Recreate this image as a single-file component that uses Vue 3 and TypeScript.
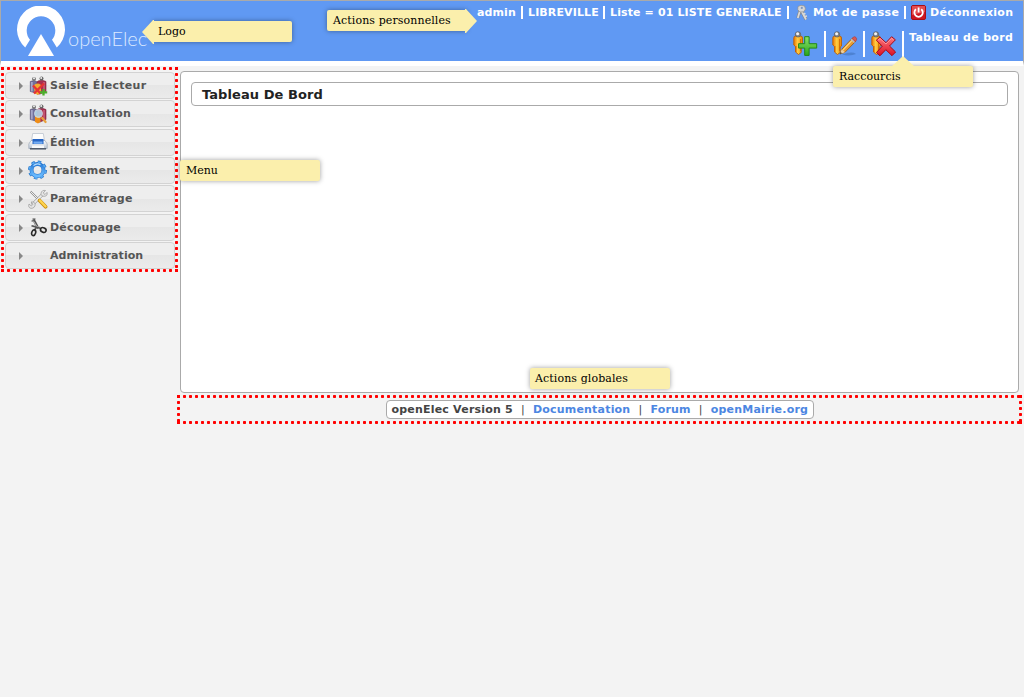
<script setup lang="ts">
interface MenuEntry {
  label: string
  icon: string
}

const menu: MenuEntry[] = [
  { label: 'Saisie Électeur', icon: 'voters-edit' },
  { label: 'Consultation', icon: 'voters-search' },
  { label: 'Édition', icon: 'printer' },
  { label: 'Traitement', icon: 'gear' },
  { label: 'Paramétrage', icon: 'tools' },
  { label: 'Découpage', icon: 'scissors' },
  { label: 'Administration', icon: '' },
]

const shortcuts: string[] = ['add', 'edit', 'remove']
const links: string[] = ['Documentation', 'Forum', 'openMairie.org']
</script>

<template>
  <div class="page">
    <svg class="defs" width="0" height="0" aria-hidden="true">
      <defs>
        <linearGradient id="orange" x1="0" x2="1" y1="0" y2="0">
          <stop offset="0" stop-color="#f07800" />
          <stop offset=".45" stop-color="#ffcf45" />
          <stop offset="1" stop-color="#ee8500" />
        </linearGradient>
        <linearGradient id="green" x1="0" x2="0" y1="0" y2="1">
          <stop offset="0" stop-color="#8be36a" />
          <stop offset="1" stop-color="#2aa51c" />
        </linearGradient>
        <linearGradient id="red" x1="0" x2="0" y1="0" y2="1">
          <stop offset="0" stop-color="#ff7a80" />
          <stop offset="1" stop-color="#dc0f22" />
        </linearGradient>
        <linearGradient id="blue" x1="0" x2="0" y1="0" y2="1">
          <stop offset="0" stop-color="#2d7ed8" />
          <stop offset="1" stop-color="#6bbcff" />
        </linearGradient>
        <linearGradient id="paper" x1="0" x2="0" y1="0" y2="1">
          <stop offset="0" stop-color="#ffffff" />
          <stop offset="1" stop-color="#b9c4d2" />
        </linearGradient>
      </defs>
    </svg>

    <header class="header">
      <div class="brand">
        <svg class="mark" width="50" height="52" viewBox="0 0 50 52">
          <path d="M9.2 41.5A24 24 0 1 1 40.8 41.5L36 33.8A14.3 14.3 0 1 0 14 33.8Z" fill="#fff" />
          <path d="M25 28L12 50H38Z" fill="#fff" />
        </svg>
        <span class="brand-name">openElec</span>
      </div>

      <div class="tools">
        <div class="personal">
          <span class="tight">admin</span><i class="bar" />
          <span class="tight">LIBREVILLE</span><i class="bar" />
          <span class="tight">Liste = 01 LISTE GENERALE</span><i class="bar" />
          <svg class="key" width="16" height="16" viewBox="0 0 16 16">
            <path d="M5.2 5L2.8 13M6 5L11 14.5" stroke="#858585" stroke-width="3" />
            <path d="M5.2 5L2.8 13M6 5L11 14.5M8.2 9.5l2.2-1.2M9.6 12l2.2-1.2" stroke="#d9d9d9" stroke-width="1.8" />
            <path d="M3 1.5L6 .3L9.5 1L10.5 4L8.8 6.8L5 7L2.8 4.8Z" fill="#d6d6d6" stroke="#909090" stroke-width=".7" />
            <circle cx="6.8" cy="2.9" r="1.1" fill="#7f96bd" />
          </svg>
          <span>Mot de passe</span><i class="bar" />
          <svg class="power" width="16" height="16" viewBox="0 0 16 16">
            <rect x=".5" y=".5" width="14" height="14" rx="1.5" fill="#cc1722" stroke="#a90d15" />
            <path d="M1 1h13v6L1 10z" fill="#f26a6a" opacity=".65" />
            <path d="M5 4.3a4.2 4.2 0 1 0 5.2 0M7.6 2.5v5" fill="none" stroke="#fff" stroke-width="1.8" />
          </svg>
          <span>Déconnexion</span>
        </div>
        <div class="shortcuts">
          <div v-for="s in shortcuts" :key="s" class="shortcut">
            <svg width="26" height="26" viewBox="0 0 26 26">
              <path d="M.8 7Q.8 5 2.8 5H7.5Q9.5 5 9.5 7V15L8.2 16V21.5L5.5 23.5L2.5 21V15.5L.8 14Z" fill="url(#orange)" stroke="#b95f08" stroke-width=".9" />
              <path d="M3 15v6M7.6 8v12" stroke="#c85d00" stroke-width=".8" />
              <circle cx="5" cy="3.4" r="2.7" fill="#858585" stroke="#555" stroke-width=".6" />
              <circle cx="4.6" cy="2.7" r="1.5" fill="#f3f3f3" />
              <path v-if="s === 'add'" d="M12.3 6.5h4.4v7h7.6v4.4h-7.6v7.3h-4.4v-7.3H6.2v-4.4h6.1z" transform="translate(-.6 -.8)" fill="url(#green)" stroke="#238817" />
              <g v-else-if="s === 'edit'">
                <path d="M10 23.5Q20 20 24 23Q18 25.5 10 23.5" fill="#315fa0" opacity=".4" />
                <path d="M8 23L9.7 18.3L20.3 7.2L23.8 10.2L13 21.3Z" fill="#e79b32" stroke="#93570f" stroke-width=".8" />
                <path d="M11 19L21 8.4" stroke="#ffd779" stroke-width="1.2" />
                <path d="M8 23L9.7 18.3L13 21.3Z" fill="#ecd0a1" />
                <path d="M8 23l.7-2l1.2 1.2z" fill="#222" />
                <path d="M18.7 8.8L22 12l1.2-1.2-3.3-3.2z" fill="#bbb" />
                <path d="M20 7.5L21.4 6Q22.7 5.1 24 6.4Q25.4 8 24.3 9.4L23.2 10.5Z" fill="#d95a56" stroke="#a4332c" stroke-width=".5" />
              </g>
              <g v-else>
                <path d="M5.3 9.2L8.9 6.1L15 11.7L20.6 5.7L24.4 8.8L18.5 15L24.6 21L21 24.7L14.8 18.7L9 24.8L5.4 21.6L11.3 15.1Z" fill="url(#red)" stroke="#a50a19" />
                <path d="M7 9L9 7.5L15 13L20.5 7.3L22.5 8.9" fill="none" stroke="#ffaeb0" stroke-width="1" opacity=".7" />
              </g>
            </svg>
            <i class="tall-bar" />
          </div>
          <span class="dashboard-link">Tableau de bord</span>
        </div>
      </div>
    </header>

    <div class="main">
      <nav class="menu dotted">
        <div v-for="m in menu" :key="m.label" class="entry">
          <i class="arrow" />
          <svg class="entry-icon" width="20" height="20" viewBox="0 0 20 20">
            <g v-if="m.icon === 'voters-edit' || m.icon === 'voters-search'">
              <path d="M2.3 5.5L6 4.5L9.5 6V18L6 16.5L2.3 15.5Z" fill="#71709c" stroke="#50466b" stroke-width=".6" />
              <path d="M3.9 6v9.5" stroke="#b7b8d8" stroke-width="1.3" />
              <path d="M10 5Q14 3.5 18 5.5V15.5L12 18H9V6Z" fill="#a92f50" stroke="#76213e" stroke-width=".6" />
              <path d="M16 6v10" stroke="#d87b91" />
              <circle cx="6" cy="3" r="2" fill="#777" /><circle cx="6" cy="2.3" r="1" fill="#eee" />
              <circle cx="13.5" cy="2.6" r="2" fill="#666" /><circle cx="13.2" cy="2" r="1" fill="#eee" />
              <template v-if="m.icon === 'voters-edit'">
                <path d="M5.5 9.5Q9 6 13 9V16L10 19L7 17.5Z" fill="#f2a92e" />
                <path d="M5 9.5L12.5 17.5M16 7.5L6 17.5" stroke="#e53334" stroke-width="2.3" />
                <path d="M15.5 13v6.5M12 16.3H19.2" stroke="#4baf2c" stroke-width="2.3" />
              </template>
              <template v-else>
                <path d="M7 12h5.5v6L10 19.5L7 18z" fill="#ef8d16" />
                <circle cx="10.5" cy="9.5" r="4" fill="#b4dff1" opacity=".85" stroke="#d8e3eb" />
                <path d="M14.2 14L17.6 18" stroke="#e8a03c" stroke-width="2.2" stroke-linecap="round" />
              </template>
            </g>
            <g v-else-if="m.icon === 'printer'">
              <path d="M4.7 1.5H15.3L16.5 9H3.5Z" fill="#fdfdfd" stroke="#b5bdc8" stroke-width=".7" />
              <path d="M3 8.5H17L19.2 12V16.5H.8V12Z" fill="url(#paper)" stroke="#8e9caf" stroke-width=".6" />
              <path d="M4.5 7H15.5V12H4.5Z" fill="#2665c4" />
              <path d="M5.5 9.5h9v2.3h-9z" fill="#75adf2" />
              <path d="M2 16.8h16" stroke="#4c5766" stroke-width="1.5" />
              <path d="M4 13.5h12v2.5H4z" fill="#f7f9fb" />
            </g>
            <g v-else-if="m.icon === 'gear'">
              <circle cx="9.5" cy="10" r="8" fill="none" stroke="#2674c5" stroke-width="3" stroke-dasharray="3.4 2.883" />
              <circle cx="9.5" cy="10" r="6" fill="none" stroke="#2874cb" stroke-width="4" />
              <circle cx="9.5" cy="10" r="6" fill="none" stroke="url(#blue)" stroke-width="2.8" />
              <circle cx="9.5" cy="10" r="8" fill="none" stroke="#58aaf4" stroke-width="1.8" stroke-dasharray="2.6 3.683" stroke-dashoffset="-.4" />
              <path d="M5.5 5.6A6 6 0 0 1 12.5 4.7" fill="none" stroke="#b7dfff" stroke-width="1.1" />
            </g>
            <g v-else-if="m.icon === 'tools'">
              <path d="M2.5 2.5L11 11" stroke="#888" stroke-width="1.8" />
              <path d="M2.5 2.5L11 11" stroke="#eee" stroke-width="1" />
              <path d="M4 16L15 5" stroke="#929292" stroke-width="3" />
              <path d="M4 16L15 5" stroke="#ececec" stroke-width="1.8" />
              <path d="M17.5 1.5L15.2 4L17 5.5L19 3.4Q20 6.6 16.7 7.3Q12.8 7.5 13 4.3Q13.8 .7 17.5 1.5M1 15L3.2 16.9L5 15.3L3 13Q6.7 12.3 7.2 15Q7.2 19.2 3 19.4Q-.2 18.5 1 15" fill="#e5e5e5" stroke="#969696" stroke-width=".7" />
              <path d="M11.6 11.4L17.6 17.8" stroke="#c48c0b" stroke-width="3.6" stroke-linecap="round" />
              <path d="M11.8 11.4L17.6 17.5" stroke="#ffd34f" stroke-width="2.3" stroke-linecap="round" />
            </g>
            <g v-else-if="m.icon === 'scissors'" fill="none">
              <path d="M5.5 2.5L10.2 11.3" stroke="#555" stroke-width="2.6" />
              <path d="M5 3.5L9.5 10.5M12 10L4.2 8.6" stroke="#bbb" stroke-width="1" />
              <path d="M3.5 8.7L13 11.5M8.5 10L6 14" stroke="#555" stroke-width="1.6" />
              <ellipse cx="5.7" cy="15.7" rx="1.9" ry="3" stroke="#292929" stroke-width="1.6" transform="rotate(18 5.7 15.7)" />
              <ellipse cx="15.3" cy="13" rx="2.9" ry="2.2" stroke="#292929" stroke-width="1.6" transform="rotate(25 15.3 13)" />
              <path d="M4.5 2h3M3.5 4h2" stroke="#444" />
            </g>
          </svg>
          <span>{{ m.label }}</span>
        </div>
      </nav>

      <div class="right">
        <section class="content">
          <h1 class="title">Tableau De Bord</h1>
        </section>
        <footer class="footer dotted">
          <div class="footer-box">
            <span>openElec Version 5</span>
            <template v-for="l in links" :key="l">
              <i class="sep">|</i><a>{{ l }}</a>
            </template>
          </div>
        </footer>
      </div>
    </div>

    <div class="note note-logo"><svg class="tip" width="12" height="24"><path d="M12 0V24H11L0 12L11 0Z" /></svg>Logo</div>
    <div class="note note-personal"><svg class="tip" width="12" height="24"><path d="M0 0V24H1L12 12L1 0Z" /></svg>Actions personnelles</div>
    <div class="note note-shortcuts"><svg class="tip" width="24" height="12"><path d="M0 12V11L12 0L24 11V12Z" /></svg>Raccourcis</div>
    <div class="note note-menu">Menu</div>
    <div class="note note-global">Actions globales</div>
  </div>
</template>

<style>
body {
  background: #f2f2f2;
}
</style>

<style scoped>
.page {
  position: relative;
  box-sizing: border-box;
  width: 1024px;
  height: 697px;
  overflow: hidden;
  background: #f3f3f3;
  font: bold 11px/14px "DejaVu Sans", sans-serif;
  letter-spacing: 0.2px;
}
.page *,
.page *::before {
  box-sizing: border-box;
}
.defs {
  position: absolute;
}
.header {
  display: flex;
  justify-content: space-between;
  height: 66px;
  border-top: 1px solid #aaa;
  border-left: 1px solid #aaa;
  border-right: 1px solid #aaa;
  border-bottom: 5px solid #fff;
  background: #6099f3;
  color: #fff;
}
.brand {
  display: flex;
  padding: 5px 0 0 15px;
}
.brand-name {
  margin: 19px 0 0 2px;
  font: 300 20px/26px Lato, sans-serif;
  letter-spacing: 0;
  color: #dce9ff;
}
.tools {
  width: 546px;
}
.personal {
  display: grid;
  grid-template-columns: 44px 7px 75px 7px 177px 8px 18px 91px 7px 19px auto;
  height: 28px;
  padding-top: 4px;
  white-space: nowrap;
}
.personal span {
  margin-top: 1px;
  letter-spacing: 0.3px;
}
.personal .tight {
  letter-spacing: 0.12px;
}
.bar {
  width: 2px;
  height: 13px;
  margin-top: 1px;
  background: #fff;
}
.key {
  margin-top: 0;
}
.shortcuts {
  display: flex;
  height: 32px;
  padding: 2px 0 0 315px;
}
.shortcut {
  display: flex;
  width: 39px;
}
.shortcut svg {
  flex: none;
  margin-left: 1px;
}
.tall-bar {
  width: 2px;
  height: 26px;
  margin-left: 5px;
  background: #fff;
}
.dashboard-link {
  white-space: nowrap;
  letter-spacing: 0.3px;
}
.main {
  display: flex;
}
.dotted {
  --dot: radial-gradient(circle at 1.5px 1.5px, #f00 1.3px, rgba(255, 0, 0, 0) 2px);
  --corner: linear-gradient(#f00, #f00);
  background:
    var(--corner) 0 0 / 3px 3px no-repeat,
    var(--corner) 100% 0 / 3px 3px no-repeat,
    var(--corner) 0 100% / 3px 3px no-repeat,
    var(--corner) 100% 100% / 3px 3px no-repeat,
    var(--dot) 0 0 / 6px 3px repeat-x,
    var(--dot) 0 100% / 6px 3px repeat-x,
    var(--dot) 0 0 / 3px 6px repeat-y,
    var(--dot) 100% 0 / 3px 6px repeat-y;
}
.menu {
  display: grid;
  grid-template-rows: repeat(7, 27px);
  row-gap: 1.33px;
  width: 177px;
  height: 205px;
  margin: 1px 0 0 1px;
  padding: 5px 0 0 4px;
}
.entry {
  display: flex;
  align-items: center;
  width: 170px;
  height: 27px;
  padding-left: 13px;
  border: 1px solid #d3d3d3;
  border-radius: 4px;
  background: linear-gradient(#eee 50%, #e6e6e6 50%, #ebebeb);
  color: #555;
}
.entry span {
  padding-top: 0.8px;
}
.entry:first-child span {
  letter-spacing: 0.3px;
}
.entry:last-child span {
  letter-spacing: 0.07px;
}
.arrow {
  width: 0;
  height: 0;
  border: 4px solid transparent;
  border-left-color: #888;
  border-right: 0;
  margin: 1px 5px 0 0;
}
.entry-icon {
  margin: 0 2px 0 0;
}
.right {
  width: 846px;
  padding-top: 5px;
}
.content {
  width: 839px;
  height: 322px;
  margin-left: 2px;
  padding: 10px;
  border: 1px solid #aaa;
  border-radius: 4px;
  background: #fff;
}
.title {
  height: 24px;
  margin: 0;
  padding: 0 10px;
  border: 1px solid #aaa;
  border-radius: 4px;
  color: #222;
  font: bold 13px/23px "DejaVu Sans", sans-serif;
  letter-spacing: 0.08px;
}
.footer {
  display: flex;
  justify-content: center;
  width: 845px;
  height: 29px;
  margin: 2px 0 0 -1px;
  padding-top: 5px;
}
.footer-box {
  display: flex;
  width: 428px;
  height: 19px;
  padding-left: 5px;
  border: 1px solid #aaa;
  border-radius: 4px;
  background: #fff;
  color: #444;
  line-height: 17px;
  white-space: nowrap;
}
.footer-box a {
  color: #4c86e2;
}
.sep {
  width: 20px;
  text-align: center;
  font-style: normal;
  font-weight: normal;
}
.note {
  position: absolute;
  width: 140px;
  height: 21px;
  padding-left: 6px;
  border-radius: 2px;
  background: #fbefac;
  box-shadow: 0 0 5px rgba(0, 0, 0, 0.38);
  color: #000;
  font: 11px/21px "DejaVu Serif", serif;
  letter-spacing: 0;
  white-space: nowrap;
}
.tip {
  position: absolute;
  fill: #fbefac;
}
.note-logo {
  left: 152px;
  top: 21px;
}
.note-logo .tip {
  left: -10px;
  top: -1px;
}
.note-personal {
  left: 327px;
  top: 10px;
  letter-spacing: 0.1px;
}
.note-personal .tip {
  left: 138px;
  top: -1px;
}
.note-shortcuts {
  left: 833px;
  top: 66px;
}
.note-shortcuts .tip {
  left: 58px;
  top: -10px;
}
.note-menu {
  left: 180px;
  top: 160px;
}
.note-global {
  left: 530px;
  top: 368px;
  padding-left: 5px;
  letter-spacing: 0.1px;
}
</style>
